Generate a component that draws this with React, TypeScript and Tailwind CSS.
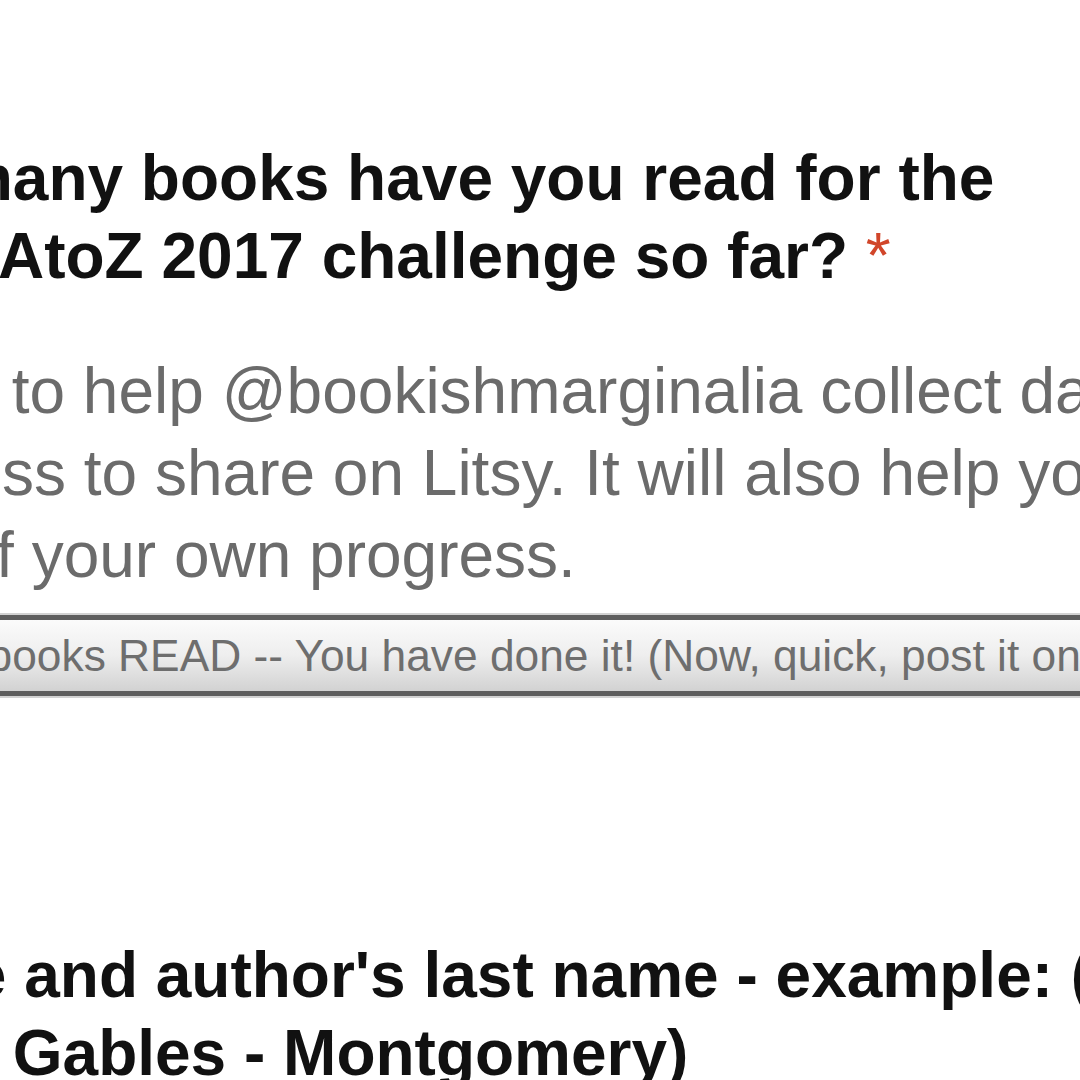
const font = { fontFamily: '"Liberation Sans", Arial, Helvetica, sans-serif' };

const App = () => {
    return (
        <div
            style={font}
            className="w-[1080px] h-[1080px] overflow-hidden bg-white flex flex-col pt-[139px]"
        >
            {/* question 1 title */}
            <div className="flex flex-col text-[64px] leading-[78px] font-bold text-[#111] whitespace-nowrap">
                <div className="ml-[-197px]">How many books have you read for the</div>
                <div className="ml-[-187px]">
                    #LitsyAtoZ 2017 challenge so far? <span className="font-normal text-[#d1462a]">*</span>
                </div>
            </div>

            {/* help text */}
            <div className="flex flex-col mt-[55px] text-[64px] leading-[82px] text-[#6b6b6b] whitespace-nowrap">
                <div className="ml-[-191px]">This is to help @bookishmarginalia collect data on our</div>
                <div className="ml-[-183px]">progress to share on Litsy. It will also help you keep</div>
                <div className="ml-[-196px]">track of your own progress.</div>
            </div>

            {/* dropdown */}
            <div className="mt-[17px] ml-[-120px] w-[1320px] border-y-2 border-[#d2d2d2]">
                <div className="h-[81px] flex items-center border-y-[5px] border-[#5e5e5e] bg-linear-to-b from-[#fbfbfb] via-[#eeeeee] to-[#d2d2d2]">
                    <span className="ml-[46px] text-[44.3px] leading-[44px] text-[#6e6e6e] whitespace-nowrap">
                        26 books READ -- You have done it! (Now, quick, post it on Litsy!)
                    </span>
                </div>
            </div>

            {/* question 2 title */}
            <div className="flex flex-col mt-[238px] text-[64px] leading-[78px] font-bold text-[#111] whitespace-nowrap">
                <div className="ml-[-124px]">Title and author's last name - example: (Anne of</div>
                <div className="ml-[-190px]">Green Gables - Montgomery)</div>
            </div>
        </div>
    );
};

export default App;
